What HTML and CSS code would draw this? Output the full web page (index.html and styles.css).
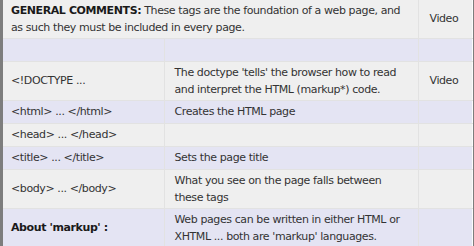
FILE: index.html
```html
<!DOCTYPE html>
<html>
<head>
<meta charset="utf-8">
<link rel="stylesheet" href="styles.css">
</head>
<body>
<div class="frame">
<table class="tags">
  <colgroup><col class="c1"><col class="c2"><col class="c3"></colgroup>
  <tr class="light">
    <td colspan="2"><b>GENERAL COMMENTS:</b> These tags are the foundation of a web page, and as such they must be included in every page.</td>
    <td class="vid">Video</td>
  </tr>
  <tr class="lav"><td></td><td></td><td></td></tr>
  <tr class="light">
    <td>&lt;!DOCTYPE ...</td>
    <td>The doctype 'tells' the browser how to read and interpret the HTML (markup*) code.</td>
    <td class="vid">Video</td>
  </tr>
  <tr class="lav"><td>&lt;html&gt; ... &lt;/html&gt;</td><td>Creates the HTML page</td><td></td></tr>
  <tr class="light"><td>&lt;head&gt; ... &lt;/head&gt;</td><td></td><td></td></tr>
  <tr class="lav"><td>&lt;title&gt; ... &lt;/title&gt;</td><td>Sets the page title</td><td></td></tr>
  <tr class="light"><td>&lt;body&gt; ... &lt;/body&gt;</td><td>What you see on the page falls between these tags</td><td></td></tr>
  <tr class="lav"><td><b>About 'markup' :</b></td><td>Web pages can be written in either HTML or XHTML ... both are 'markup' languages.</td><td></td></tr>
</table>
</div>
</body>
</html>
```
FILE: styles.css
```css
html, body {
  margin: 0;
  padding: 0;
  background: #7d7d7d;
}
.frame {
  width: 469px;
  margin-left: 3px;
  background: #fafafa;
  padding-bottom: 1px;
}
.tags {
  width: 469px;
  border-collapse: collapse;
  table-layout: fixed;
  font-family: "DejaVu Sans", Verdana, sans-serif;
  font-size: 11px;
  letter-spacing: -0.4px;
  line-height: 16.5px;
  color: #333;
}
.c1 { width: 161px; }
.c2 { width: 254px; }
.c3 { width: 54px; }
.tags td {
  padding: 3px 4px 2px 8px;
  height: 17px;
  vertical-align: middle;
  border: 1px solid #e2e2e2;
  border-top: none;
  border-left: none;
}
.tags td:nth-child(2) { padding-left: 10px; padding-right: 7px; }
.tags td.vid { padding-left: 11px; }
.tags td:last-child { border-right: 1px solid #fbfbfb; }
.tags b { color: #1a1a1a; }
.light td { background: #efefef; }
.lav td { background: #e4e4f3; }
```
